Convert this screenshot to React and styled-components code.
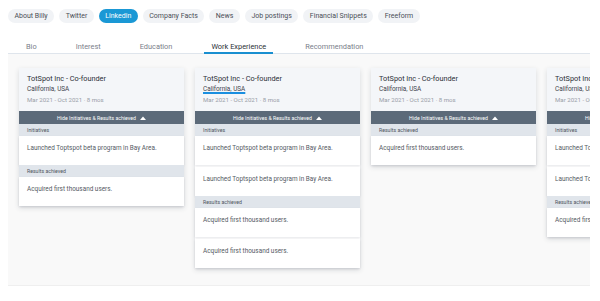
import React from 'react';
import styled, { createGlobalStyle } from 'styled-components';

const GlobalStyle = createGlobalStyle`
  body {
    margin: 0;
    padding: 9px 8px 0;
    background: #ffffff;
    font-family: Roboto, "Liberation Sans", sans-serif;
  }
`;

const pills = ['About Billy', 'Twitter', 'Linkedin', 'Company Facts', 'News', 'Job postings', 'Financial Snippets', 'Freeform'];
const tabs = ['Bio', 'Interest', 'Education', 'Work Experience', 'Recommendation'];

const launch = 'Launched Toptspot beta program in Bay Area.';
const acquired = 'Acquired first thousand users.';

const jobs = [
  { initiatives: [launch], results: [acquired] },
  { initiatives: [launch, launch], results: [acquired, acquired], marked: true },
  { initiatives: [], results: [acquired] },
  { initiatives: [launch, launch], results: [acquired] },
];

const PillRow = styled.div`
  display: flex;
  gap: 5px;
`;

const Pill = styled.div`
  height: 14px;
  padding: 0 6.5px;
  border-radius: 8px;
  display: flex;
  align-items: center;
  font-size: 7px;
  color: ${(p) => (p.$active ? '#ffffff' : '#4a4f57')};
  background: ${(p) => (p.$active ? '#1a98d5' : '#f1f3f6')};
`;

const TabRow = styled.div`
  display: flex;
  gap: 25px;
  margin-top: 18px;
  padding-left: 11px;
  border-bottom: 1px solid #dfe5ec;
  width: 571px;
`;

const Tab = styled.div`
  padding: 1px 7px 0;
  line-height: 10px;
  font-size: 7.4px;
  color: ${(p) => (p.$active ? '#2a2f36' : '#7a808a')};
  border-bottom: 2px solid ${(p) => (p.$active ? '#1a8fd0' : 'transparent')};
  margin-bottom: -1px;
`;

const Board = styled.div`
  width: 582px;
  height: 232px;
  background: #f9f9f9;
  border-bottom: 1px solid #efefef;
  display: flex;
  align-items: flex-start;
  gap: 11px;
  padding: 14px 11px 0;
  box-sizing: border-box;
  overflow: hidden;
`;

const Card = styled.div`
  flex: 0 0 165px;
  background: #ffffff;
  box-shadow: 0 2px 5px rgba(40, 50, 70, 0.16);
`;

const CardHead = styled.div`
  height: 43px;
  box-sizing: border-box;
  padding: 6px 8px 0;
  background: #f4f6f9;
`;

const Title = styled.div`
  font-size: 7.3px;
  line-height: 10px;
  color: #2c3038;
`;

const Place = styled.div`
  margin-top: 1px;
  font-size: 6.4px;
  line-height: 9px;
  color: #3f444c;
  span {
    text-decoration: ${(p) => (p.$marked ? 'underline' : 'none')};
    text-decoration-color: #1a8fe0;
    text-decoration-thickness: 1.5px;
    text-underline-offset: 1px;
  }
`;

const Dates = styled.div`
  margin-top: 1px;
  font-size: 6.1px;
  line-height: 9px;
  color: #9aa0a8;
`;

const ToggleBar = styled.div`
  height: 13px;
  background: #5c6a79;
  color: #ffffff;
  font-size: 5.2px;
  display: flex;
  align-items: center;
  justify-content: center;
  gap: 4px;
`;

const Band = styled.div`
  height: 12px;
  padding-left: 8px;
  display: flex;
  align-items: center;
  background: #e0e5eb;
  color: #4f5560;
  font-size: 5.2px;
`;

const Item = styled.div`
  height: 29px;
  box-sizing: border-box;
  padding: 8px 8px 0;
  background: #ffffff;
  font-size: 6.4px;
  line-height: 8px;
  color: #555b64;
  box-shadow: 0 1px 2px rgba(40, 50, 70, 0.12);
  & + & {
    margin-top: 2px;
  }
`;

const Caret = () => (
  <svg width="6" height="4" viewBox="0 0 6 4">
    <path d="M0 4 L3 0.5 L6 4 Z" fill="#ffffff" />
  </svg>
);

const Section = ({ label, items }) =>
  items.length ? (
    <>
      <Band>{label}</Band>
      {items.map((t, i) => (
        <Item key={i}>{t}</Item>
      ))}
    </>
  ) : null;

const JobCard = ({ job }) => (
  <Card>
    <CardHead>
      <Title>TotSpot Inc - Co-founder</Title>
      <Place $marked={job.marked}>
        <span>California, USA</span>
      </Place>
      <Dates>Mar 2021 - Oct 2021 · 8 mos</Dates>
    </CardHead>
    <ToggleBar>
      Hide Initiatives &amp; Results achieved <Caret />
    </ToggleBar>
    <Section label="Initiatives" items={job.initiatives} />
    <Section label="Results achieved" items={job.results} />
  </Card>
);

export default function App() {
  return (
    <>
      <GlobalStyle />
      <PillRow>
        {pills.map((p) => (
          <Pill key={p} $active={p === 'Linkedin'}>
            {p}
          </Pill>
        ))}
      </PillRow>
      <TabRow>
        {tabs.map((t) => (
          <Tab key={t} $active={t === 'Work Experience'}>
            {t}
          </Tab>
        ))}
      </TabRow>
      <Board>
        {jobs.map((job, i) => (
          <JobCard key={i} job={job} />
        ))}
      </Board>
    </>
  );
}
